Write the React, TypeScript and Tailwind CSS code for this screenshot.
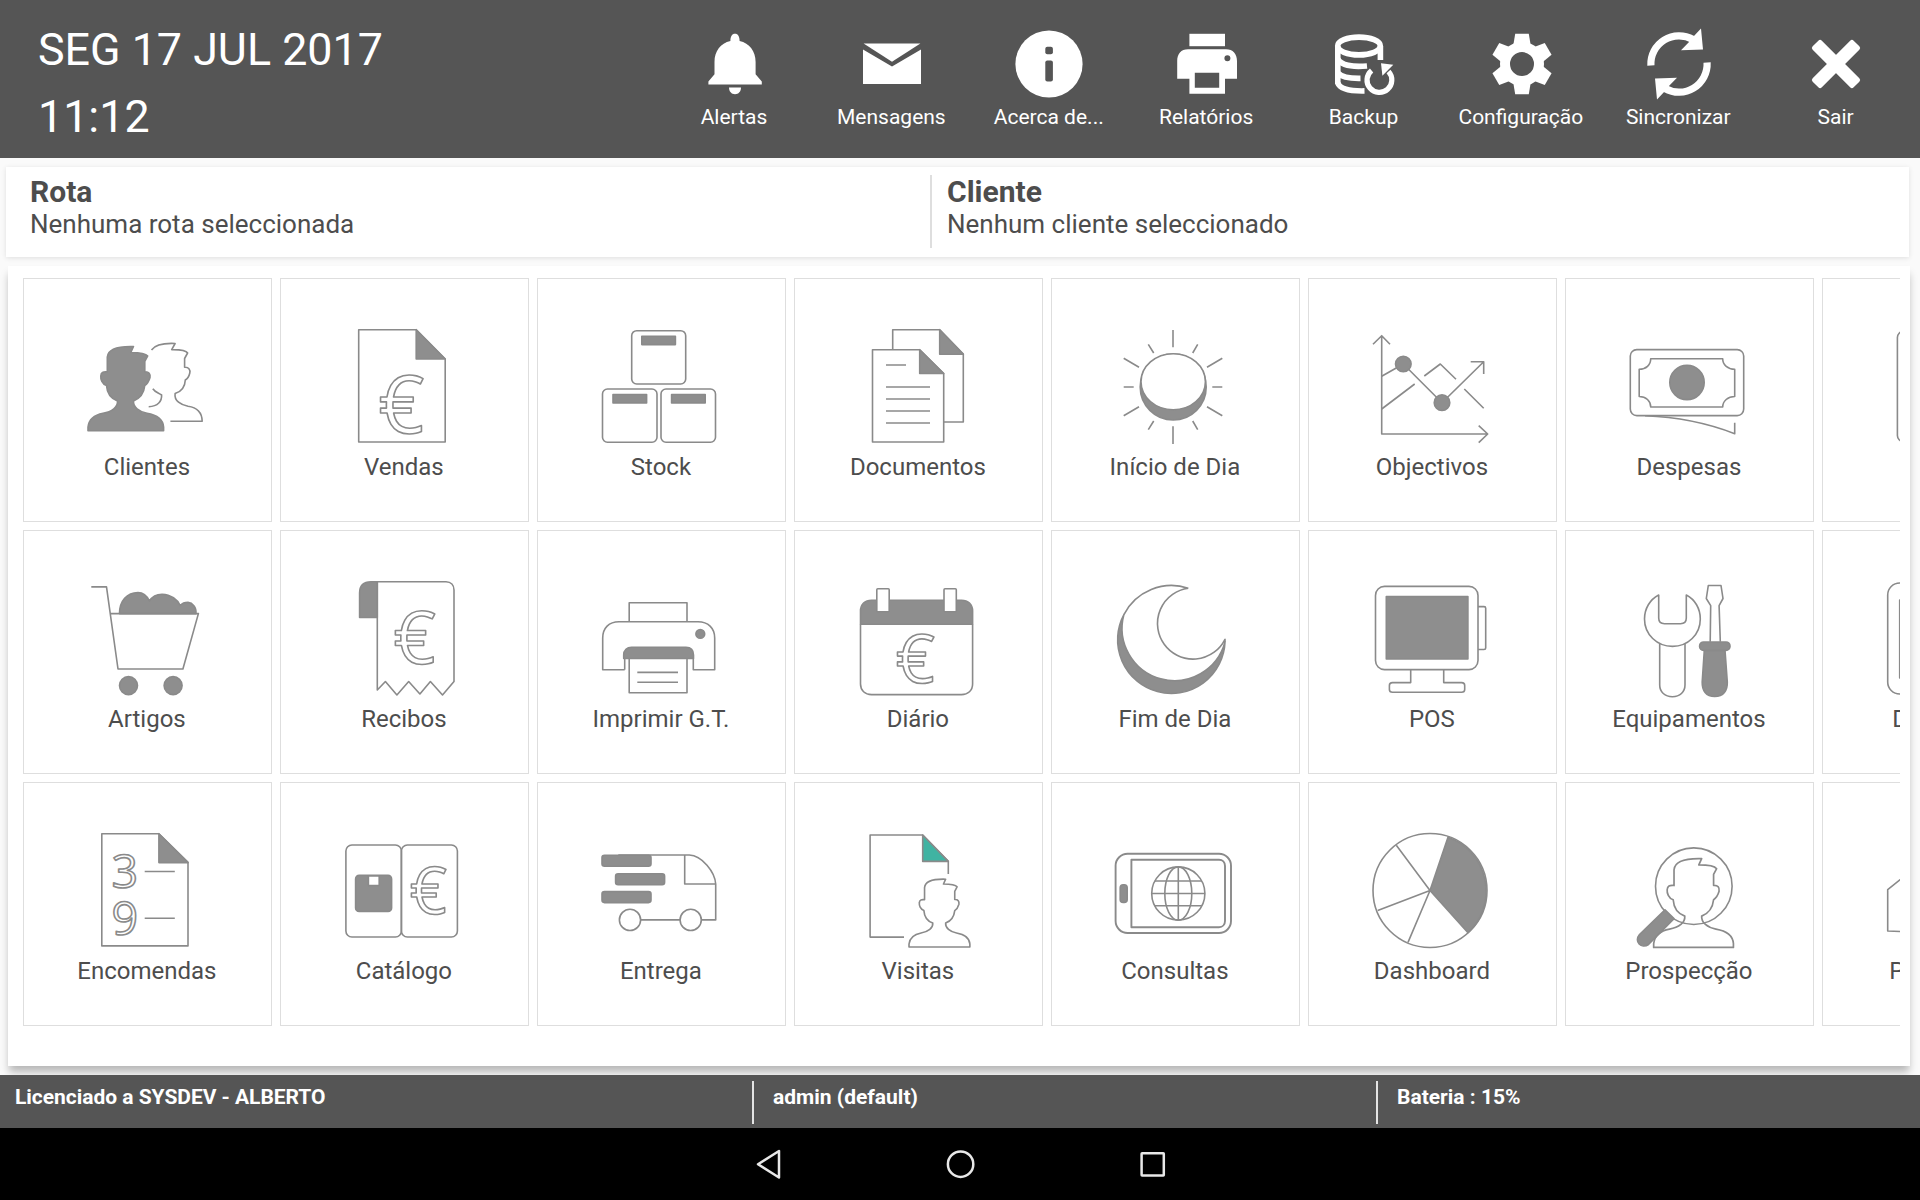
import type { ReactNode } from "react";

const SOLID = "#8e8e8e";
const LINE = "#8a8a8a";

const personPath =
  "M3 104.7V101C4 93 10 88.8 18 87.3C27 86 33 81 32.5 75C25.5 72.5 22 67 21.5 59.5C17 58 15.5 53 15.8 50C16 46.5 18 45.5 22.3 46V31C23 23 32 20 48.5 20.5L45.8 26.5C52 26.5 60 26.5 62.7 30L59.8 35.5V45.8C64 45.5 65.5 48 65 51.5C64 55 62 58 59.8 59.5C59 67 55 72.5 48.5 75C48 81 54 86 62 87.3C72 89 78 93 78.6 101V104.7Z";

function Euro({ x, y, size }: { x: number; y: number; size: number }) {
  return (
    <text x={x} y={y} fontSize={size} fontWeight={500} fontFamily="'Open Sans', 'Noto Sans', sans-serif" fill="none">
      €
    </text>
  );
}

/* ---------- Tile drawings, 120x120 line art ---------- */

const art: Record<string, ReactNode> = {
  clientes: (
    <>
      <path d={personPath} fill={SOLID} />
      <path d="M66.5 24C70 19 79 17 90.1 17.5L86.7 23.6C94 23.5 101 24 102.6 27L99.6 32.5V41.3C104 41 105.5 44 104.8 47C104 50.5 102 53 100.3 54C100 62 95 66 90.1 67.6C89 75 96 79 103 80.3C112 81.5 117 87 117.2 95.3H85.4" />
      <path d="M67.8 62.7C70 66 73 66.5 76.6 69C77 75 73 80.5 63.7 80.7" />
    </>
  ),
  vendas: (
    <>
      <path d="M16.7 3.7H74.2L103.2 33V116H16.7Z" />
      <path d="M74.2 3.7V33H103.2Z" fill={SOLID} />
      <Euro x={36.6} y={107.3} size={80} />
    </>
  ),
  stock: (
    <>
      <rect x="32.7" y="4.7" width="54" height="53.3" rx="5" />
      <rect x="3.5" y="63" width="54.5" height="53.2" rx="5" />
      <rect x="62" y="63" width="54.5" height="53.2" rx="5" />
      <g fill={SOLID}>
        <rect x="42.8" y="10.2" width="33.6" height="8.4" />
        <rect x="14" y="68.5" width="33.6" height="8.4" />
        <rect x="72.6" y="68.5" width="33.6" height="8.4" />
      </g>
    </>
  ),
  documentos: (
    <>
      <path d="M36.7 23.7V3.7H83.7L107.3 28V96H88" />
      <path d="M83.7 3.7V28.3H107.3Z" fill={SOLID} />
      <path d="M16.5 23.7H63.7L87.7 47.5V116H16.5Z" />
      <path d="M63.7 23.7V47.5H87.7Z" fill={SOLID} />
      <path d="M30 39H50M30 61H74M30 73H74M30 85H74M30 97H74" />
    </>
  ),
  inicio: (
    <>
      <circle cx="60.2" cy="61" r="33" fill={SOLID} />
      <ellipse cx="60.2" cy="55.7" rx="32.2" ry="28" fill="#fff" />
      <path d="M60 4V21.3M60 100.3V118M10.7 61H20.7M99.3 61H109.3M10.7 32.3L26 41.3M109.3 32.3L94 41.3M10.7 89.7L26 80.7M109.3 89.7L94 80.7M35.3 18.3L40.7 27M84.7 18.3L79.7 27M35.3 103.7L40.7 95M84.7 103.7L79.7 95" />
    </>
  ),
  objectivos: (
    <>
      <path d="M3 18.3L11.7 9.7L20 18.3M11.7 9.7V108H117.7M108.7 99.7L117.7 108L108.7 116.7" />
      <path d="M11.7 50.3L33.3 38L72 76.7L113.7 35.7M100.7 35.7H113.7V48" />
      <path d="M11.7 83L44.7 58M54.3 50L70.3 38L86 53.3M94.3 63L113.7 82.3" />
      <circle cx="33.3" cy="38" r="7.8" fill={SOLID} />
      <circle cx="72" cy="76.7" r="7.8" fill={SOLID} />
    </>
  ),
  despesas: (
    <>
      <rect x="3.3" y="23.6" width="113.4" height="66" rx="6.5" />
      <path d="M23.7 32.7H95.7C95.7 39 101 43.3 107.7 43.3V70.5C101 70.5 95.7 75 95.7 81H23.7C23.7 75 19 70.5 12.2 70.5V43.3C19 43.3 23.7 39 23.7 32.7Z" />
      <circle cx="60" cy="56.4" r="17.2" fill={SOLID} />
      <path d="M18 89.8C52 91 80 97 107.7 107.7V96.7" />
    </>
  ),
  caixa: <rect x="13.4" y="5.5" width="94" height="110" rx="6" />,
  artigos: (
    <>
      <path d="M34.5 35.6C34.5 23 42 14.6 53 14.6C58 14.6 62 18 64.4 23C67.5 18 72 16.2 77 16.2C86 16.5 92.5 21.5 95.2 27.5C97.5 25 100 24.4 103 24.4C107.5 24.8 111.5 29 111 35.6Z" fill={SOLID} />
      <path d="M6.3 8.9H21.5L33 91H97.9L113.4 35.6H24.9" />
      <circle cx="43.5" cy="107.6" r="9" fill={SOLID} />
      <circle cx="88.1" cy="107.6" r="9" fill={SOLID} />
    </>
  ),
  recibos: (
    <>
      <path d="M35.3 3.7H29C21 3.7 17.6 8 17.6 15V39.5H35.3Z" fill={SOLID} />
      <path d="M35.3 3.7H104C109 3.7 112 7 112 12V103.5L100.5 117L88.4 103.5L77.9 116L66.7 103.5L54.9 117L43.4 103.5L35.3 112Z" />
      <Euro x={51.6} y={85.5} size={74} />
    </>
  ),
  imprimir: (
    <>
      <path d="M30.2 43.7V24.8H88V43.7" />
      <path d="M25.7 91.7H3.7V60C3.7 50 10 43.7 20 43.7H99C109 43.7 115.7 50 115.7 60V91.7H94.3V80.5" />
      <path d="M25.7 91.7V80.5" />
      <path d="M24.7 80.5V77C24.7 72 28 69.2 32.5 69.2H87C91.5 69.2 94.5 72 94.5 77V80.5Z" fill={SOLID} />
      <path d="M30.2 80.5V114.7H88V80.5M38.3 94.4H79M38.3 104.2H79" />
      <circle cx="101.3" cy="55.9" r="4.4" fill={SOLID} />
    </>
  ),
  diario: (
    <>
      <path d="M4.5 46.2V33C4.5 26 9 22.2 15.5 22.2H105.5C112 22.2 116.6 26 116.6 33V46.2Z" fill={SOLID} />
      <path d="M4.5 46.2V106C4.5 112.5 9 116.6 15.5 116.6H105.5C112 116.6 116.6 112.5 116.6 106V46.2" />
      <rect x="20.8" y="10.8" width="12.4" height="23" rx="1" fill="#fff" />
      <rect x="88" y="10.8" width="12.3" height="23" rx="1" fill="#fff" />
      <Euro x={39.8} y={105.4} size={68.5} />
    </>
  ),
  fim: (
    <>
      <path d="M10.9 36.6A53.7 53.7 0 1 0 112 64A52.3 52.3 0 0 1 10.9 36.6Z" fill={SOLID} />
      <path d="M75.3 10.2A53.6 53.6 0 0 0 10.9 36.6M112 64V61.3A35.6 35.6 0 1 1 75.3 10.2" />
    </>
  ),
  pos: (
    <>
      <rect x="5.5" y="8.4" width="102.5" height="83.2" rx="9" />
      <rect x="16.3" y="18.6" width="81.6" height="62.4" fill={SOLID} />
      <path d="M108 28.6H114C115 28.6 115.7 29.2 115.7 30.2V70C115.7 71 115 71.5 114 71.5H108" />
      <path d="M40.7 91.7V104.6H22.5C20.5 104.6 19.4 105.6 19.4 107.4V111.6C19.4 113.4 20.5 114.3 22.5 114.3H91.6C93.6 114.3 94.7 113.4 94.7 111.6V107.4C94.7 105.6 93.6 104.6 91.6 104.6H73.7V91.7" />
    </>
  ),
  equipamentos: (
    <>
      <path d="M31.7 17V40C31.7 43.5 34 45.7 37.5 45.7H53.5C57 45.7 59.3 43.5 59.3 40V17C68 21.5 73.3 30.5 73.3 41C73.3 56.5 61 68.4 45.5 68.4C30 68.4 17.5 56.5 17.5 41C17.5 30.5 23 21.5 31.7 17Z" />
      <path d="M32.7 66V107C32.7 114 38 118.7 45.4 118.7S58 114 58 107V66" />
      <path d="M83.2 63.8L83.7 27.6L79.3 20.5L81.3 7.5H94L96 20.5L92.1 27.6L93.3 63.8" />
      <path d="M77.3 72.4L75.2 104C75 112.5 79 118.5 87.7 118.5S100.6 112.5 100.3 104L98 72.4Z" fill={SOLID} />
      <rect x="72.6" y="64" width="30.4" height="8.4" rx="4" fill={SOLID} />
    </>
  ),
  depositos: (
    <>
      <rect x="3.7" y="5" width="112" height="111" rx="12" />
      <path d="M100 22H15.7V100H100" />
    </>
  ),
  encomendas: (
    <>
      <path d="M16.8 3.7H73.9L103 32.4V115.9H16.8Z" />
      <path d="M73.9 3.7V32.6H103Z" fill={SOLID} />
      <path d="M59.7 41.5H89.8M59.7 88.2H89.8" />
      <g fontSize="46.5" fontWeight="500" fontFamily="'Open Sans', 'Noto Sans', sans-serif">
        <text x="26.6" y="58.4">3</text>
        <text x="26.6" y="104.8">9</text>
      </g>
    </>
  ),
  catalogo: (
    <>
      <rect x="3.9" y="15" width="55.5" height="92" rx="6" />
      <rect x="59.4" y="15" width="56" height="92" rx="6" />
      <rect x="13.6" y="45.4" width="36" height="36" rx="3.5" fill={SOLID} />
      <rect x="26.4" y="46" width="10.8" height="9.6" fill="#fff" />
      <Euro x={67.8} y={84.2} size={65} />
    </>
  ),
  entrega: (
    <>
      <path d="M19.3 25H90.3C103 25.5 116 42 116.7 54V89.9H102.2M85.7 25V54H116.7M41.7 89.9H81.3" />
      <circle cx="31" cy="89.9" r="10.6" />
      <circle cx="91.7" cy="89.9" r="10.6" />
      <g fill={SOLID}>
        <rect x="3" y="25.2" width="49" height="11" rx="2.5" />
        <rect x="16.6" y="43.8" width="49" height="11" rx="2.5" />
        <rect x="3" y="61.6" width="49" height="11" rx="2.5" />
      </g>
    </>
  ),
  visitas: (
    <>
      <path d="M48 107.1H14.1V5H66.7L92.3 31.4V43.9" />
      <path d="M66.7 5V31.4H92.3Z" fill="#40b3a2" />
      <g transform="translate(50.6 32.7) scale(0.805)" strokeWidth="2">
        <path d={personPath} />
      </g>
    </>
  ),
  consultas: (
    <>
      <rect x="2.6" y="23.7" width="115.4" height="79.3" rx="12" strokeWidth="1.9" />
      <path d="M18.4 29.8H106C109.5 29.8 112 32.3 112 36V91C112 94.6 109.5 97.2 106 97.2H18.4Z" strokeWidth="1.9" />
      <rect x="7.2" y="54.8" width="7" height="17.6" rx="3" fill={SOLID} />
      <circle cx="65.3" cy="63.5" r="26.6" />
      <ellipse cx="65.3" cy="63.5" rx="13.5" ry="26.6" />
      <path d="M65.3 36.9V90.1M38.7 63.5H91.9M41.7 51H88.9M41.7 75.7H88.9" />
    </>
  ),
  dashboard: (
    <>
      <circle cx="60" cy="60.5" r="57" />
      <path d="M60 60.5L78 7.2A57 57 0 0 1 98 102.7Z" fill={SOLID} />
      <path d="M60 60.5L38 112.4M60 60.5L7.7 80.4M60 60.5L26.3 15.2" />
    </>
  ),
  prospeccao: (
    <>
      <circle cx="66.8" cy="56.2" r="38.3" />
      <g transform="translate(23.5 7) scale(1.055)">
        <path d={personPath} />
      </g>
      <path d="M38 79.8L12.5 104.5C6.5 111.5 14.5 119.5 21.5 114.5L47 88.6Z" fill={SOLID} />
    </>
  ),
  pendentes: <path d="M60 14L3.7 59.7V101L60 103.5" />,
};

function TileArt({ name }: { name: string }) {
  return (
    <svg
      className="mr-[5px] h-[120px] w-[120px] shrink-0 overflow-visible"
      viewBox="0 0 120 120"
      fill="none"
      stroke={LINE}
      strokeWidth="1.6"
      strokeLinejoin="round"
    >
      {art[name]}
    </svg>
  );
}

const rows: [string, string][][] = [
  [
    ["clientes", "Clientes"],
    ["vendas", "Vendas"],
    ["stock", "Stock"],
    ["documentos", "Documentos"],
    ["inicio", "Início de Dia"],
    ["objectivos", "Objectivos"],
    ["despesas", "Despesas"],
    ["caixa", "Caixa"],
  ],
  [
    ["artigos", "Artigos"],
    ["recibos", "Recibos"],
    ["imprimir", "Imprimir G.T."],
    ["diario", "Diário"],
    ["fim", "Fim de Dia"],
    ["pos", "POS"],
    ["equipamentos", "Equipamentos"],
    ["depositos", "Depósitos"],
  ],
  [
    ["encomendas", "Encomendas"],
    ["catalogo", "Catálogo"],
    ["entrega", "Entrega"],
    ["visitas", "Visitas"],
    ["consultas", "Consultas"],
    ["dashboard", "Dashboard"],
    ["prospeccao", "Prospecção"],
    ["pendentes", "Pendentes"],
  ],
];

/* ---------- Toolbar icons, 72x72, white on grey ---------- */

const syncArrow = (
  <>
    <path d="M7.9 37.5A28.2 28.2 0 0 1 50 11.5" fill="none" stroke="#fff" strokeWidth="7.2" />
    <path d="M58 0.5L60 21.5L38 22.2L45.8 14.2L50 9Z" />
  </>
);

const toolbar: { label: string; icon: ReactNode }[] = [
  {
    label: "Alertas",
    icon: (
      <>
        <path d="M36 5.8C39 5.8 40.6 8.5 40.6 13C50.5 15.3 56.6 23 56.6 34V46.3L62.8 53.5V56.5H9.4V53.5L15.5 46.3V34C15.5 23 21.5 15.3 31.4 13C31.4 8.5 33 5.8 36 5.8Z" />
        <path d="M30 59.5H42C42 63.5 39.5 66.2 36 66.2S30 63.5 30 59.5Z" />
      </>
    ),
  },
  {
    label: "Mensagens",
    icon: (
      <>
        <path d="M7.6 15.5H64.4L36 33.8Z" />
        <path d="M7 21.5L36 38.6L65 21.5V56H7Z" />
      </>
    ),
  },
  {
    label: "Acerca de...",
    icon: (
      <>
        <circle cx="36" cy="36" r="33.6" />
        <g fill="#555">
          <rect x="32.3" y="18.8" width="7.6" height="7.4" rx="2" />
          <rect x="32.3" y="32.5" width="7.6" height="21" rx="2" />
        </g>
      </>
    ),
  },
  {
    label: "Relatórios",
    icon: (
      <>
        <rect x="18.4" y="5.8" width="35.6" height="12.4" />
        <path
          fillRule="evenodd"
          d="M17 21.3H55C62 21.3 66 26 66 33V50.8H54V65.8H18.4V50.8H6.2V33C6.2 26 10 21.3 17 21.3ZM23.8 44.8V59.8H48.2V44.8ZM56.4 27.2A3 3 0 1 0 56.4 33.2A3 3 0 1 0 56.4 27.2Z"
        />
      </>
    ),
  },
  {
    label: "Backup",
    icon: (
      <>
        <g fill="none" stroke="#fff" strokeWidth="5.6">
          <ellipse cx="31" cy="18" rx="21.3" ry="8.9" />
          <path d="M9.8 18V56M52.4 18V32" />
          <path d="M9.8 31C13 36.8 24 39.4 39 38" />
          <path d="M9.8 45C14 49.3 22 50.6 32.5 50.4" />
          <path d="M9.8 55C12 61 22 63.2 36.5 62.9" />
          <path d="M43.6 42.4A12.4 12.4 0 1 0 60.5 43.6" strokeWidth="5.2" />
        </g>
        <path d="M53 35.2L65.3 36.8L54.4 47.8Z" />
      </>
    ),
  },
  {
    label: "Configuração",
    icon: (
      <>
        <circle cx="36" cy="36" r="17" fill="none" stroke="#fff" strokeWidth="10" />
        {[0, 60, 120, 180, 240, 300].map((a) => (
          <path key={a} d="M29.2 5.8H42.8L45 19H27Z" transform={`rotate(${a} 36 36)`} />
        ))}
      </>
    ),
  },
  {
    label: "Sincronizar",
    icon: (
      <>
        {syncArrow}
        <g transform="rotate(180 36 36)">{syncArrow}</g>
      </>
    ),
  },
  {
    label: "Sair",
    icon: (
      <>
        <rect x="7" y="29.5" width="58" height="13" rx="2.5" transform="rotate(45 36 36)" />
        <rect x="7" y="29.5" width="58" height="13" rx="2.5" transform="rotate(-45 36 36)" />
      </>
    ),
  },
];

export default function App() {
  return (
    <div className="flex h-[1200px] w-[1920px] flex-col overflow-hidden bg-[#fafafa] font-[Roboto,sans-serif] text-[#4d4d4d]">
      <header className="flex h-[158px] shrink-0 justify-between bg-[#555555] pr-[5px] text-white">
        <div className="pt-[16px] pl-[38px] text-[44.8px] leading-[67px] whitespace-nowrap">
          <div>SEG 17 JUL 2017</div>
          <div>11:12</div>
        </div>
        <nav className="grid w-[1259px] grid-cols-8 pt-[27.6px]">
          {toolbar.map((t) => (
            <div key={t.label} className="flex flex-col items-center">
              <svg className="h-[72px] w-[72px]" viewBox="0 0 72 72" fill="#fff">
                {t.icon}
              </svg>
              <span className="mt-[4.4px] mr-[1.4px] text-[21px] leading-[26px] whitespace-nowrap">{t.label}</span>
            </div>
          ))}
        </nav>
      </header>

      <section className="mt-[9px] ml-[6px] flex h-[90px] w-[1903px] shrink-0 bg-white shadow-[0_1px_5px_rgba(0,0,0,0.11)]">
        <div className="w-[924px] pt-[8px] pl-[24px]">
          <div className="text-[30px] leading-[33px] font-bold">Rota</div>
          <div className="text-[26px] leading-[33px]">Nenhuma rota seleccionada</div>
        </div>
        <div className="mt-[8px] h-[73px] w-[2px] bg-[#dedede]" />
        <div className="pt-[8px] pl-[15px]">
          <div className="text-[30px] leading-[33px] font-bold">Cliente</div>
          <div className="text-[26px] leading-[33px]">Nenhum cliente seleccionado</div>
        </div>
      </section>

      <main className="mt-[9px] ml-[8px] h-[800px] w-[1902px] shrink-0 bg-white pt-[12px] pl-[15px] shadow-[0_7px_8px_-1px_rgba(0,0,0,0.27)]">
        <div className="flex w-[1877px] flex-col gap-[8px] overflow-hidden">
          {rows.map((row, i) => (
            <div key={i} className="flex gap-[8px]">
              {row.map(([icon, label]) => (
                <div
                  key={label}
                  className="flex h-[244px] w-[249px] shrink-0 flex-col items-center border border-[#dedede] bg-white pt-[47px]"
                >
                  <TileArt name={icon} />
                  <span className="mt-[7px] mr-[1.2px] text-[24px] leading-[28px] whitespace-nowrap">{label}</span>
                </div>
              ))}
            </div>
          ))}
        </div>
      </main>

      <footer className="relative mt-[9px] flex h-[53px] shrink-0 bg-[#555555] pt-[6px] text-[21px] leading-[32px] font-bold text-white">
        <div className="w-[752px] pl-[15px] tracking-[-0.03px]">Licenciado a SYSDEV - ALBERTO</div>
        <div className="h-[43px] w-[2px] bg-[#e4e4e4]" />
        <div className="w-[622px] pl-[19px]">admin (default)</div>
        <div className="h-[43px] w-[2px] bg-[#e4e4e4]" />
        <div className="pl-[19px]">Bateria : 15%</div>
      </footer>

      <nav className="flex h-[72px] shrink-0 items-center justify-center gap-[156px] bg-black">
        {[
          <path key="back" d="M29 5V31.5L8 18.2Z" />,
          <circle key="home" cx="18.6" cy="18.2" r="12.7" />,
          <rect key="recent" x="7.6" y="7.2" width="22.2" height="22.2" rx="0.5" />,
        ].map((shape, i) => (
          <svg
            key={i}
            className="h-[36px] w-[36px]"
            viewBox="0 0 36 36"
            fill="none"
            stroke="#e8e8e8"
            strokeWidth="2.5"
            strokeLinejoin="round"
          >
            {shape}
          </svg>
        ))}
      </nav>
    </div>
  );
}
